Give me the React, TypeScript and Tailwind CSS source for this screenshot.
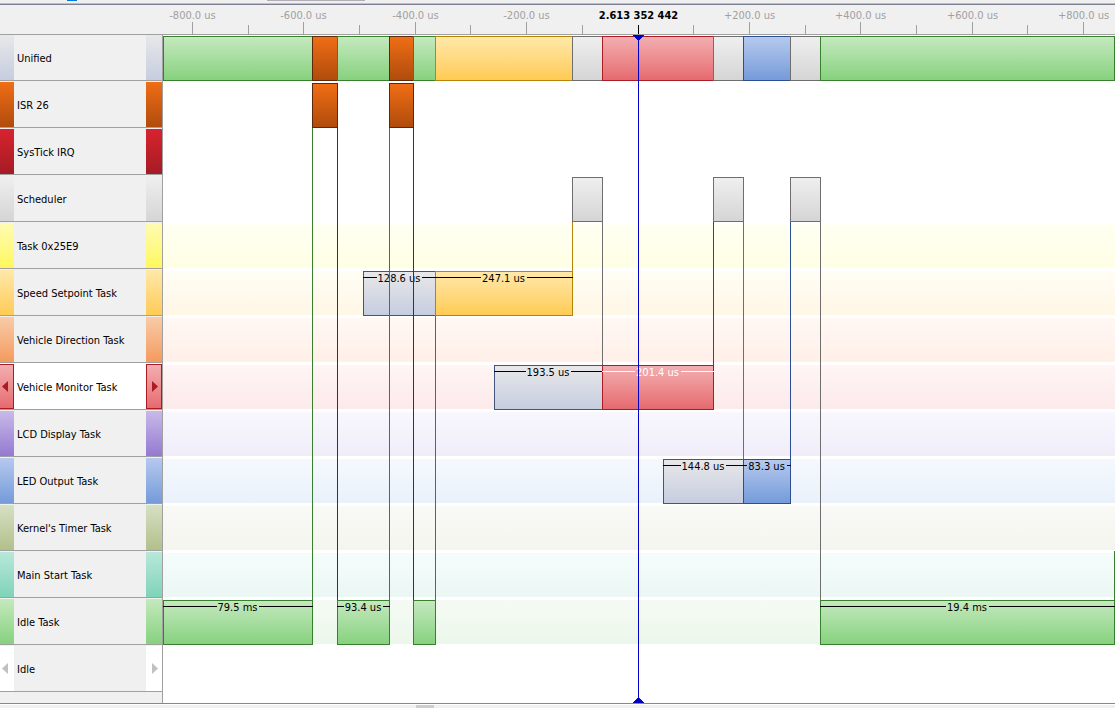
import React from "react";
import clsx from "clsx";

type Tone =
  | "unified" | "isr" | "systick" | "gray" | "yellow" | "amber" | "orange" | "red"
  | "purple" | "blue" | "olive" | "teal" | "green" | "white";

const FILL: Record<Tone, string> = {
  unified: "from-[#e8e8ea] to-[#c6cddf]",
  isr: "from-[#f06e16] to-[#b04c0c]",
  systick: "from-[#d8232f] to-[#a51c24]",
  gray: "from-[#efefef] to-[#d5d5d5]",
  yellow: "from-[#fffbb0] to-[#fff85a]",
  amber: "from-[#ffe8a8] to-[#ffcb52]",
  orange: "from-[#f8cba8] to-[#f49a5c]",
  red: "from-[#f2aeb1] to-[#e56a6f]",
  purple: "from-[#c9b9e8] to-[#957ad0]",
  blue: "from-[#b6c9ee] to-[#759bd9]",
  olive: "from-[#d6e0c3] to-[#b2c08a]",
  teal: "from-[#b8e8da] to-[#7fd3b8]",
  green: "from-[#c4e9be] to-[#86d17e]",
  white: "from-white to-white",
};

const BORDER: Partial<Record<Tone, string>> = {
  unified: "border-[#43557a]",
  isr: "border-[#5c2a0a]",
  gray: "border-[#6e6e6e]",
  amber: "border-[#b58408]",
  red: "border-[#ab1b24]",
  blue: "border-[#2b4f90]",
  green: "border-[#38802f]",
};

const TINT: Partial<Record<Tone, string>> = {
  yellow: "from-[#fffff3] to-[#ffffe5]",
  amber: "from-[#fffdf5] to-[#fff7e6]",
  orange: "from-[#fff8f4] to-[#fff0e8]",
  red: "from-[#fff5f4] to-[#fceaeb]",
  purple: "from-[#f8f7fd] to-[#f0edf9]",
  blue: "from-[#f5f9fe] to-[#eaf1fb]",
  olive: "from-[#f9faf6] to-[#f4f5ee]",
  teal: "from-[#f5fdfb] to-[#ebf7f4]",
  green: "from-[#f5fbf4] to-[#ecf7eb]",
};

type Bar = { from: number; to: number; tone: Tone; label?: string; light?: boolean };
type Row = { name: string; tone: Tone; bars?: Bar[]; selected?: boolean; arrows?: boolean };

/* Positions along the time axis are given in units of 1/952 of the visible span. */
const SPAN = 952;
const pct = (v: number) => `${(v / SPAN) * 100}%`;

const ROWS: Row[] = [
  {
    name: "Unified",
    tone: "unified",
    bars: [
      { from: 0, to: 149, tone: "green" },
      { from: 149, to: 174, tone: "isr" },
      { from: 174, to: 226, tone: "green" },
      { from: 226, to: 250, tone: "isr" },
      { from: 250, to: 272, tone: "green" },
      { from: 272, to: 409, tone: "amber" },
      { from: 409, to: 439, tone: "gray" },
      { from: 439, to: 550, tone: "red" },
      { from: 550, to: 580, tone: "gray" },
      { from: 580, to: 627, tone: "blue" },
      { from: 627, to: 657, tone: "gray" },
      { from: 657, to: 951, tone: "green" },
    ],
  },
  {
    name: "ISR 26",
    tone: "isr",
    bars: [
      { from: 149, to: 174, tone: "isr" },
      { from: 226, to: 250, tone: "isr" },
    ],
  },
  { name: "SysTick IRQ", tone: "systick" },
  {
    name: "Scheduler",
    tone: "gray",
    bars: [
      { from: 409, to: 439, tone: "gray" },
      { from: 550, to: 580, tone: "gray" },
      { from: 627, to: 657, tone: "gray" },
    ],
  },
  { name: "Task 0x25E9", tone: "yellow" },
  {
    name: "Speed Setpoint Task",
    tone: "amber",
    bars: [
      { from: 200, to: 272, tone: "unified", label: "128.6 us" },
      { from: 272, to: 409, tone: "amber", label: "247.1 us" },
    ],
  },
  { name: "Vehicle Direction Task", tone: "orange" },
  {
    name: "Vehicle Monitor Task",
    tone: "red",
    selected: true,
    arrows: true,
    bars: [
      { from: 331, to: 439, tone: "unified", label: "193.5 us" },
      { from: 439, to: 550, tone: "red", label: "201.4 us", light: true },
    ],
  },
  { name: "LCD Display Task", tone: "purple" },
  {
    name: "LED Output Task",
    tone: "blue",
    bars: [
      { from: 500, to: 580, tone: "unified", label: "144.8 us" },
      { from: 580, to: 627, tone: "blue", label: "83.3 us" },
    ],
  },
  { name: "Kernel's Timer Task", tone: "olive" },
  { name: "Main Start Task", tone: "teal" },
  {
    name: "Idle Task",
    tone: "green",
    bars: [
      { from: 0, to: 149, tone: "green", label: "79.5 ms" },
      { from: 174, to: 226, tone: "green", label: "93.4 us" },
      { from: 250, to: 272, tone: "green" },
      { from: 657, to: 951, tone: "green", label: "19.4 ms" },
    ],
  },
  { name: "Idle", tone: "white", arrows: true },
];

/* Context switches: a line from the bottom of one row down to the bar of another. */
const SWITCHES: { at: number; from: number; to: number; tone: Tone }[] = [
  { at: 149, from: 1, to: 12, tone: "green" },
  { at: 174, from: 1, to: 12, tone: "isr" },
  { at: 226, from: 1, to: 12, tone: "green" },
  { at: 250, from: 1, to: 12, tone: "isr" },
  { at: 272, from: 5, to: 12, tone: "green" },
  { at: 409, from: 3, to: 5, tone: "amber" },
  { at: 439, from: 3, to: 7, tone: "gray" },
  { at: 550, from: 3, to: 7, tone: "red" },
  { at: 580, from: 3, to: 9, tone: "gray" },
  { at: 627, from: 3, to: 9, tone: "blue" },
  { at: 657, from: 3, to: 12, tone: "gray" },
  { at: 951, from: 10, to: 12, tone: "green" },
];

const TICKS: { at: number; label?: string; now?: boolean }[] = [
  { at: 29, label: "-800.0 us" },
  { at: 85 },
  { at: 140, label: "-600.0 us" },
  { at: 196 },
  { at: 252, label: "-400.0 us" },
  { at: 307 },
  { at: 363, label: "-200.0 us" },
  { at: 419 },
  { at: 475, label: "2.613 352 442", now: true },
  { at: 530 },
  { at: 586, label: "+200.0 us" },
  { at: 642 },
  { at: 697, label: "+400.0 us" },
  { at: 753 },
  { at: 809, label: "+600.0 us" },
  { at: 864 },
  { at: 920, label: "+800.0 us" },
];

const rowBottom = (i: number) => 46 + 47 * i;

function Arrow({ dir, active }: { dir: "left" | "right"; active?: boolean }) {
  return (
    <svg width="6" height="11" viewBox="0 0 6 11" className={active ? "fill-[#ab1b24]" : "fill-[#c0c0c0]"} aria-hidden="true">
      <path d={dir === "left" ? "M6 0V11L0 5.5Z" : "M0 0V11L6 5.5Z"} />
    </svg>
  );
}

function Swatch({ row, side }: { row: Row; side: "left" | "right" }) {
  const cls = clsx(
    "flex shrink-0 items-center bg-linear-to-b",
    side === "left" ? "w-3.5 pl-0.5" : "w-4 justify-end",
    side === "right" && (row.selected ? "pr-[3px]" : "pr-1"),
    FILL[row.tone],
    row.selected && "border-y border-r border-[#ab1b24]",
    row.selected && side === "right" && "border-l",
  );
  if (!row.arrows) return <div className={cls} />;
  return (
    <button
      type="button"
      className={cls}
      aria-label={side === "left" ? `Previous ${row.name} event` : `Next ${row.name} event`}
    >
      <Arrow dir={side} active={row.selected} />
    </button>
  );
}

function RowHeader({ row, first }: { row: Row; first: boolean }) {
  return (
    <li
      className={clsx(
        "flex border-b border-[#a0a0a0]",
        first ? "h-[46px]" : "h-[47px] pt-px",
        row.selected && "bg-white",
      )}
    >
      <Swatch row={row} side="left" />
      <span className="flex flex-1 items-center whitespace-nowrap pl-[3px] pt-[3px]">{row.name}</span>
      <Swatch row={row} side="right" />
    </li>
  );
}

function TimeBar({ bar }: { bar: Bar }) {
  const line = clsx("h-px flex-1", bar.light ? "bg-white" : "bg-black");
  return (
    <div
      className="absolute bottom-0 h-[45px]"
      style={{ left: pct(bar.from), width: pct(bar.to - bar.from + 1) }}
    >
      <div className={clsx("h-full border bg-linear-to-b", FILL[bar.tone], BORDER[bar.tone])} />
      {bar.label && (
        <div className={clsx("absolute inset-x-0 top-0 flex h-[13px] items-center", bar.light ? "text-white" : "text-black")}>
          <span className={line} />
          <span className="whitespace-nowrap pl-px pr-0.5 pt-0.5 leading-[13px]">{bar.label}</span>
          <span className={line} />
        </div>
      )}
    </div>
  );
}

function Lane({ row, first }: { row: Row; first: boolean }) {
  return (
    <div className={clsx("relative", first ? "h-[46px]" : "h-[47px] pt-0.5 pb-px")}>
      {TINT[row.tone] && <div className={clsx("h-full bg-linear-to-b", TINT[row.tone])} />}
      {row.bars?.map((b) => <TimeBar key={b.from} bar={b} />)}
    </div>
  );
}

function Ruler() {
  return (
    <div className="flex h-[30px] border-b border-[#a0a0a0]">
      <div className="w-[163px] shrink-0" />
      <div className="relative flex-1 overflow-hidden text-[#a0a0a0]">
        {TICKS.map((t) => (
          <div
            key={t.at}
            className="absolute bottom-0 flex h-full w-px flex-col items-center justify-between"
            style={{ left: pct(t.at) }}
          >
            <span className={clsx("whitespace-nowrap pt-1 leading-[13px]", t.now && "font-bold text-black")}>{t.label}</span>
            <span className={clsx("w-px", t.now ? "h-[9px] bg-black" : t.label ? "h-3 bg-[#a0a0a0]" : "h-[9px] bg-[#a0a0a0]")} />
          </div>
        ))}
      </div>
    </div>
  );
}

function Cursor() {
  return (
    <div className="absolute inset-y-0 flex w-px flex-col items-center bg-[#0000c8]" style={{ left: pct(475) }}>
      <svg width="11" height="5" viewBox="0 0 11 5" className="shrink-0 fill-[#0000c8]" aria-hidden="true">
        <path d="M0 0H11V1H10V2H9V3H8V4H7V5H4V4H3V3H2V2H1V1H0Z" />
      </svg>
      <div className="flex-1" />
      <svg width="11" height="5" viewBox="0 0 11 5" className="shrink-0 fill-[#0000c8]" aria-hidden="true">
        <path d="M0 5H11V4H10V3H9V2H8V1H7V0H4V1H3V2H2V3H1V4H0Z" />
      </svg>
    </div>
  );
}

export default function App() {
  return (
    <div className="flex min-h-screen flex-col bg-[#f0f0f0] font-['Tahoma','DejaVu_Sans_Condensed','DejaVu_Sans',sans-serif] text-[11px] text-black">
      <div className="flex h-[3px] shrink-0 items-start">
        <span className="ml-[67px] h-px w-2.5 bg-[#0078d7]" />
        <span className="ml-[190px] h-px w-[98px] bg-[#b0adb5]" />
      </div>
      <div className="h-0.5 shrink-0 border-t border-[#c0c0c0] bg-[#7c8090]" />
      <Ruler />
      <main className="flex flex-1">
        <ul className="w-[163px] shrink-0 border-r border-[#a0a0a0]">
          {ROWS.map((r, i) => <RowHeader key={r.name} row={r} first={i === 0} />)}
        </ul>
        <div className="relative flex-1 bg-white">
          {ROWS.map((r, i) => <Lane key={r.name} row={r} first={i === 0} />)}
          {SWITCHES.map((s) => (
            <div
              key={s.at}
              className={clsx("absolute w-px border-l", BORDER[s.tone])}
              style={{ left: pct(s.at), top: rowBottom(s.from), height: rowBottom(s.to - 1) + 2 - rowBottom(s.from) }}
            />
          ))}
          <Cursor />
        </div>
      </main>
      <div className="h-0.5 shrink-0 border-t border-[#85859a] bg-white" />
      <div className="h-[3px] shrink-0">
        <div className="ml-[416px] h-full w-[18px] bg-[#cdcdcd]" />
      </div>
    </div>
  );
}
